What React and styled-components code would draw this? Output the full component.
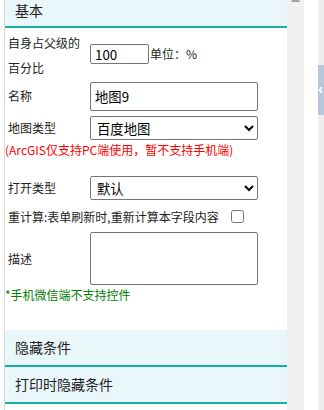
import React from "react";
import styled, { createGlobalStyle } from "styled-components";

const GlobalStyle = createGlobalStyle`
  html, body {
    margin: 0;
    padding: 0;
    background: #ffffff;
    overflow: hidden;
  }
  body {
    font-family: "Microsoft YaHei", "Noto Sans CJK SC", sans-serif;
    color: #333;
  }
`;

const Screen = styled.div`
  display: flex;
  height: 410px;
  width: 324px;
  overflow: hidden;
`;

const Gutter = styled.div`
  width: 4px;
  flex: none;
`;

const Panel = styled.div`
  width: 282px;
  flex: none;
  border-left: 1px solid #dcdcdc;
  display: flex;
  flex-direction: column;
`;

// the top band is scrolled partly out of view, so it is shorter
const SectionHeader = styled.div`
  box-sizing: content-box;
  height: ${(p) => (p.$cut ? 20 : 35)}px;
  padding-left: 10px;
  padding-bottom: ${(p) => (p.$cut ? 6 : 0)}px;
  background: #e9f6fa;
  border-bottom: 2px solid #15b2a4;
  font-size: 14px;
  line-height: ${(p) => (p.$cut ? 20 : 35)}px;
  color: #222;
`;

const Form = styled.div`
  display: flex;
  flex-direction: column;
  margin-bottom: 25px;
`;

const Row = styled.div`
  display: flex;
  align-items: ${(p) => p.$align || "center"};
  margin-top: ${(p) => p.$mt || 0}px;
  min-height: ${(p) => p.$h || 0}px;
`;

const Label = styled.div`
  width: 82px;
  padding-left: 3px;
  flex: none;
  font-size: 12px;
  line-height: ${(p) => p.$lh || 20}px;
  color: #222;
`;

const TextInput = styled.input`
  box-sizing: border-box;
  width: ${(p) => p.$w}px;
  height: ${(p) => p.$h}px;
  margin: ${(p) => p.$mt || 0}px 0 0 0;
  padding: 0 4px;
  border: 1px solid #767676;
  border-radius: 2px;
  font-family: "Microsoft YaHei", "Noto Sans CJK SC", sans-serif;
  font-size: 13.33px;
  color: #000;
  background: #fff;
  outline: none;
`;

const Select = styled.select`
  box-sizing: border-box;
  width: 168px;
  height: 24px;
  margin: 0;
  padding: 0 2px;
  border: 1px solid #767676;
  border-radius: 2px;
  font-family: "Microsoft YaHei", "Noto Sans CJK SC", sans-serif;
  font-size: 13.33px;
  color: #000;
  background: #fff;
`;

const TextArea = styled.textarea`
  display: block;
  box-sizing: border-box;
  width: 168px;
  height: 53px;
  margin: 0;
  border: 1px solid #767676;
  border-radius: 2px;
  resize: none;
  background: #fff;
`;

const Unit = styled.span`
  font-size: 12px;
  margin: 14px 0 0 1px;
  line-height: 20px;
  color: #222;
`;

const Note = styled.div`
  font-size: 12px;
  line-height: 20px;
  color: ${(p) => p.$color};
  white-space: nowrap;
`;

const CheckText = styled.span`
  font-size: 12px;
  padding-left: 3px;
  color: #222;
  white-space: nowrap;
`;

const Check = styled.input`
  width: 13px;
  height: 13px;
  margin: 0 0 0 12px;
`;

const Scrollbar = styled.div`
  width: 17px;
  flex: none;
  background: #f0f0f0;
  display: flex;
  justify-content: center;
`;

const ArrowUp = styled.svg`
  display: block;
  margin-top: -5px;
`;

const Spacer = styled.div`
  width: 14px;
  flex: none;
`;

const SideStrip = styled.div`
  flex: 1;
  background: #eeeeee;
  padding-top: 65px;
`;

const SideTab = styled.div`
  width: 100%;
  height: 50px;
  background: #b7c7da;
  display: flex;
  align-items: center;
`;

export default function App() {
  return (
    <>
      <GlobalStyle />
      <Screen>
        <Gutter />
        <Panel>
          <SectionHeader $cut>基本</SectionHeader>
          <Form>
            <Row $align="flex-start" $mt={2}>
              <Label $lh={25}>自身占父级的百分比</Label>
              <TextInput $w={59} $h={20} $mt={14} defaultValue="100" />
              <Unit>单位：%</Unit>
            </Row>
            <Row $h={31}>
              <Label>名称</Label>
              <TextInput $w={168} $h={29} $mt={2} defaultValue="地图9" />
            </Row>
            <Row $mt={5}>
              <Label>地图类型</Label>
              <Select defaultValue="baidu">
                <option value="baidu">百度地图</option>
                <option value="arcgis">ArcGIS</option>
              </Select>
            </Row>
            <Note $color="#ff0000">(ArcGIS仅支持PC端使用，暂不支持手机端)</Note>
            <Row $mt={16}>
              <Label>打开类型</Label>
              <Select defaultValue="default">
                <option value="default">默认</option>
              </Select>
            </Row>
            <Row $h={32}>
              <CheckText>重计算:表单刷新时,重新计算本字段内容</CheckText>
              <Check type="checkbox" />
            </Row>
            <Row>
              <Label>描述</Label>
              <TextArea />
            </Row>
            <Note $color="#008000">*手机微信端不支持控件</Note>
          </Form>
          <SectionHeader>隐藏条件</SectionHeader>
          <SectionHeader>打印时隐藏条件</SectionHeader>
        </Panel>
        <Scrollbar>
          <ArrowUp width="9" height="7" viewBox="0 0 9 7">
            <polygon points="4.5,0 9,7 0,7" fill="#a3a3a3" />
          </ArrowUp>
        </Scrollbar>
        <Spacer />
        <SideStrip>
          <SideTab>
            <svg width="6" height="8" viewBox="0 0 6 8">
              <polyline points="4,1 1.5,4 4,7" fill="none" stroke="#ffffff" strokeWidth="1.6" />
            </svg>
          </SideTab>
        </SideStrip>
      </Screen>
    </>
  );
}
